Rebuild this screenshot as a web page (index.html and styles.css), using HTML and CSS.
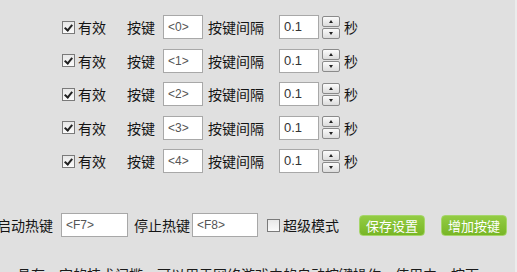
FILE: index.html
```html
<!DOCTYPE html>
<html lang="zh-CN">
<head>
  <meta charset="UTF-8" />
  <title>按键设置</title>
  <link rel="stylesheet" href="styles.css">
</head>
<body>
  <div class="panel">
    <div class="keys">
      <div class="key-row">
        <span class="check checked"></span><span class="label">有效</span>
        <span class="label key-label">按键</span><div class="box key-box">&lt;0&gt;</div>
        <span class="label gap-label">按键间隔</span><div class="box num-box">0.1</div>
        <div class="spin"><span class="up"></span><span class="down"></span></div><span class="label">秒</span>
      </div>
      <div class="key-row">
        <span class="check checked"></span><span class="label">有效</span>
        <span class="label key-label">按键</span><div class="box key-box">&lt;1&gt;</div>
        <span class="label gap-label">按键间隔</span><div class="box num-box">0.1</div>
        <div class="spin"><span class="up"></span><span class="down"></span></div><span class="label">秒</span>
      </div>
      <div class="key-row">
        <span class="check checked"></span><span class="label">有效</span>
        <span class="label key-label">按键</span><div class="box key-box">&lt;2&gt;</div>
        <span class="label gap-label">按键间隔</span><div class="box num-box">0.1</div>
        <div class="spin"><span class="up"></span><span class="down"></span></div><span class="label">秒</span>
      </div>
      <div class="key-row">
        <span class="check checked"></span><span class="label">有效</span>
        <span class="label key-label">按键</span><div class="box key-box">&lt;3&gt;</div>
        <span class="label gap-label">按键间隔</span><div class="box num-box">0.1</div>
        <div class="spin"><span class="up"></span><span class="down"></span></div><span class="label">秒</span>
      </div>
      <div class="key-row">
        <span class="check checked"></span><span class="label">有效</span>
        <span class="label key-label">按键</span><div class="box key-box">&lt;4&gt;</div>
        <span class="label gap-label">按键间隔</span><div class="box num-box">0.1</div>
        <div class="spin"><span class="up"></span><span class="down"></span></div><span class="label">秒</span>
      </div>
    </div>

    <div class="hotkeys">
      <span class="label">启动热键</span><div class="box hot-box">&lt;F7&gt;</div>
      <span class="label stop-label">停止热键</span><div class="box hot-box stop-box">&lt;F8&gt;</div>
      <span class="check"></span><span class="label">超级模式</span>
      <button class="btn save">保存设置</button>
      <button class="btn add">增加按键</button>
    </div>

    <p class="note">具有一定的技术门槛，可以用于网络游戏中的自动按键操作<span class="hl">，</span>使用中，按下</p>
  </div>
</body>
</html>
```

FILE: styles.css
```css
* {
  margin: 0;
  padding: 0;
  box-sizing: border-box;
}

body {
  background: #e0e0e0;
  font-family: "Noto Sans CJK SC", "Liberation Sans", sans-serif;
  font-size: 14px;
  color: #141414;
  width: 517px;
  height: 272px;
  overflow: hidden;
}

.panel {
  height: 272px;
  border-right: 2px solid #ececec;
}

.keys {
  display: flex;
  flex-direction: column;
  gap: 9.5px;
  padding: 15px 0 0 62px;
}

.key-row {
  display: flex;
  align-items: center;
  height: 24px;
}

.label {
  line-height: 24px;
  white-space: nowrap;
}

.check {
  width: 13px;
  height: 13px;
  border: 1px solid #7a7a7a;
  background: linear-gradient(#e8e8e8, #fafafa);
  margin-right: 3px;
  position: relative;
}

.check.checked::after {
  content: '';
  position: absolute;
  left: 3px;
  top: 1px;
  width: 3px;
  height: 6px;
  border: solid #222;
  border-width: 0 2px 2px 0;
  transform: rotate(40deg);
}

.key-label { margin: 0 8px 0 21px; }
.gap-label { margin: 0 15px 0 5px; }

.box {
  height: 24px;
  background: #fff;
  border: 1px solid #a8a8a8;
  font-family: "Liberation Sans", sans-serif;
  color: #555;
  line-height: 22px;
  padding-left: 4px;
}

.key-box {
  width: 40px;
  font-size: 12px;
}

.num-box {
  width: 40px;
  font-size: 13px;
  color: #333;
}

.spin {
  width: 18px;
  height: 23px;
  margin: 0 4px 0 3px;
  display: flex;
  flex-direction: column;
  gap: 1px;
}

.spin span {
  flex: 1;
  border: 1px solid #8a8a8a;
  border-radius: 2px;
  background: linear-gradient(#fbfbfb, #dcdcdc);
  position: relative;
}

.spin span::after {
  content: '';
  position: absolute;
  left: 6px;
  top: 3px;
  border-left: 2px solid transparent;
  border-right: 2px solid transparent;
}

.spin .up::after { border-bottom: 3px solid #222; }
.spin .down::after { border-top: 3px solid #222; }

.hotkeys {
  display: flex;
  align-items: center;
  height: 24px;
  margin: 40px 0 0 -3px;
}

.hot-box {
  width: 67px;
  font-size: 12px;
  margin-left: 8px;
}

.stop-label { margin: 0 0 0 6px; }
.hot-box.stop-box { margin-left: 2px; width: 66px; }

.hotkeys .check { margin: 0 3px 0 9px; }

.btn {
  font-family: "Noto Sans CJK SC", sans-serif;
  font-size: 13px;
  color: #fff;
  width: 66px;
  height: 21px;
  border: 1px solid #a6d66a;
  border-radius: 4px;
  background: linear-gradient(#93cc44, #78b626);
  line-height: 19px;
}

.save { margin-left: 20px; }
.add { margin-left: 16px; }

.note {
  margin: 27px 0 0 17px;
  font-size: 14px;
  line-height: 20px;
  color: #1a1a1a;
  white-space: nowrap;
}

.note .hl { color: #8fd0a0; }
```
